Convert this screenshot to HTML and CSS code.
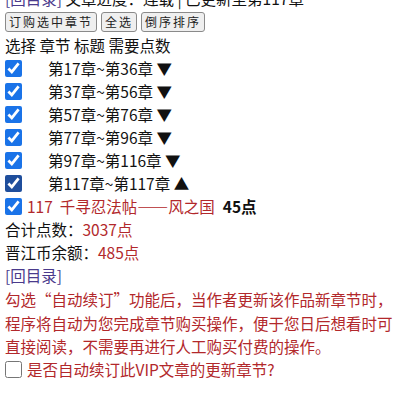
FILE: index.html
```html
<!DOCTYPE html>
<html lang="zh-CN">
<head>
    <meta charset="UTF-8">
    <meta name="viewport" content="width=device-width, initial-scale=1.0">
    <title>订购章节</title>
    <link rel="stylesheet" href="styles.css">
</head>
<body>
    <div class="progress"><a class="back" href="#">[回目录]</a> 文章进度：连载 | 已更新至第117章</div>
    <div class="actions">
        <button>订购选中章节</button>
        <button>全选</button>
        <button>倒序排序</button>
    </div>
    <div class="line">选择 章节 标题 需要点数</div>
    <div class="groups">
        <label class="group"><input type="checkbox" checked><span>第17章~第36章 ▼</span></label>
        <label class="group"><input type="checkbox" checked><span>第37章~第56章 ▼</span></label>
        <label class="group"><input type="checkbox" checked><span>第57章~第76章 ▼</span></label>
        <label class="group"><input type="checkbox" checked><span>第77章~第96章 ▼</span></label>
        <label class="group"><input type="checkbox" checked><span>第97章~第116章 ▼</span></label>
        <label class="group open"><input type="checkbox" checked><span>第117章~第117章 ▲</span></label>
    </div>
    <label class="chapter"><input type="checkbox" checked><span class="red">117&nbsp; 千寻忍法帖——风之国</span><b>45点</b></label>
    <div class="line">合计点数：<span class="red">3037点</span></div>
    <div class="line">晋江币余额：<span class="red">485点</span></div>
    <div class="line"><a class="back" href="#">[回目录]</a></div>
    <p class="notice">勾选“自动续订”功能后，当作者更新该作品新章节时，程序将自动为您完成章节购买操作，便于您日后想看时可直接阅读，不需要再进行人工购买付费的操作。</p>
    <label class="auto"><input type="checkbox"><span class="red">是否自动续订此VIP文章的更新章节?</span></label>
</body>
</html>
```

FILE: styles.css
```css
body {
    margin: 0 5px;
    font-family: "Noto Sans CJK SC", "Noto Sans", sans-serif;
    font-size: 15.5px;
    line-height: 23px;
    color: #111;
    background: #fff;
}
.progress {
    margin-top: -13px;
    white-space: nowrap;
}
.back {
    color: #4a3a8c;
    text-decoration: none;
}
.actions {
    display: flex;
    gap: 4px;
    height: 24px;
    align-items: center;
}
.actions button {
    height: 20px;
    padding: 0 3px;
    font-family: "Noto Sans CJK SC", sans-serif;
    font-size: 12px;
    letter-spacing: 2px;
    line-height: 18px;
    color: #222;
    background: #efefef;
    border: 1px solid #8a8a8a;
    border-radius: 3px;
}
.line {
    height: 23px;
}
.red {
    color: #b2282b;
}
.group, .chapter, .auto {
    display: flex;
    align-items: center;
    height: 23px;
}
input[type="checkbox"] {
    width: 17px;
    height: 17px;
    margin: 0;
    accent-color: #1a73e8;
}
.group.open input {
    accent-color: #1f4e9c;
}
.group span {
    margin-left: 26px;
}
.chapter span {
    margin-left: 5px;
}
.chapter b {
    margin-left: 8px;
    font-weight: 700;
}
.notice {
    margin: 1px 0 0;
    color: #b2282b;
    line-height: 23.5px;
}
.auto {
    height: 22px;
}
.auto input {
    accent-color: #888;
}
.auto span {
    margin-left: 5px;
}
```
